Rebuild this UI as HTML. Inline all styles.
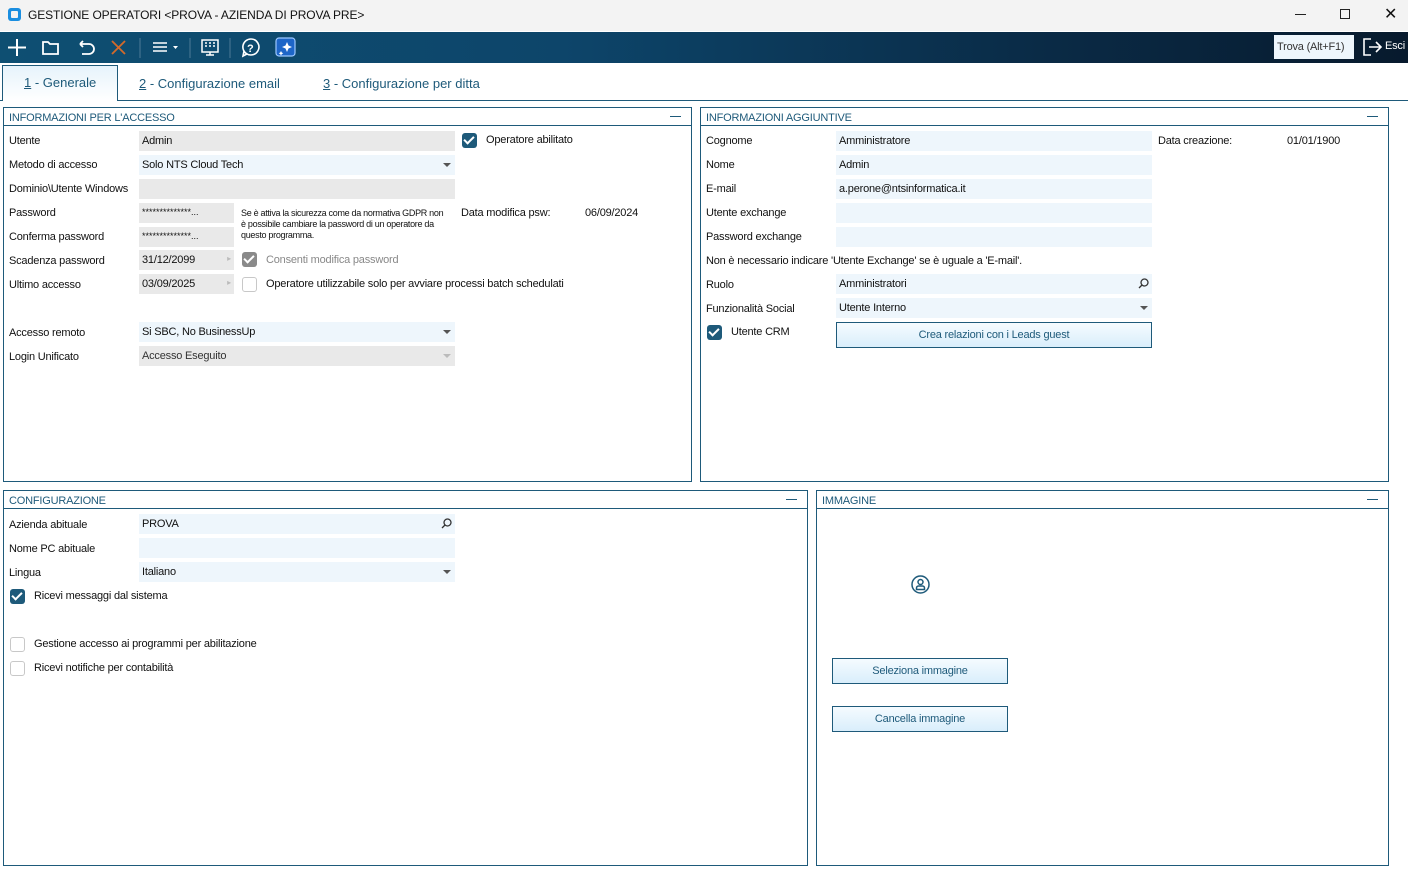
<!DOCTYPE html>
<html><head><meta charset="utf-8"><style>
*{box-sizing:border-box;margin:0;padding:0}
body{width:1408px;height:869px;background:#fff;font-family:"Liberation Sans",sans-serif;font-size:11px;letter-spacing:-0.2px;color:#111;position:relative;overflow:hidden}
.a{position:absolute;white-space:nowrap}
.pn{position:absolute;border:1px solid #1e5a7a}
.ph{position:absolute;left:0;right:0;top:0;height:18px;border-bottom:1px solid #1e5a7a;color:#1e5a7a;padding:4px 0 0 5px;font-size:11px}
.ph:after{content:"";position:absolute;right:10px;top:8px;width:11px;height:1px;background:#1e5a7a}
.in{position:absolute;height:20px;padding:4px 0 0 3px;white-space:nowrap}
.g{background:#e9e9e9}.b{background:#eef6fc}
.dd:after{content:"";position:absolute;right:4px;top:8px;border:4px solid transparent;border-top:4px solid #555;border-bottom:0}
.dl:after{border-top-color:#bbb}
.cb{position:absolute;width:15px;height:15px;border-radius:3px}
.on{background:#1e5a7a}
.on:after{content:"";position:absolute;left:4px;top:1px;width:4px;height:8px;border:solid #fff;border-width:0 2px 2px 0;transform:rotate(45deg)}
.off{border:1px solid #c8c8c8;background:#fff}
.btn{position:absolute;border:1px solid #1e5a7a;background:linear-gradient(#f5fbff,#d9eefb);color:#1e5a7a;text-align:center;padding-top:6px}
.mg{position:absolute;right:3px;top:4px}
</style></head><body>
<div class="a" style="left:0;top:0;width:1408px;height:31px;background:#f3f3f3"></div>
<div class="a" style="left:8px;top:8px;width:13px;height:13px;border-radius:3px;background:#1a8ee0"></div>
<div class="a" style="left:11px;top:11px;width:7px;height:7px;border-radius:1px;background:#f3f3f3"></div>
<div class="a" style="left:28px;top:8px;font-size:12px;letter-spacing:-0.1px">GESTIONE OPERATORI &lt;PROVA - AZIENDA DI PROVA PRE&gt;</div>
<div class="a" style="left:1295px;top:14px;width:11px;height:1px;background:#222"></div>
<div class="a" style="left:1340px;top:9px;width:10px;height:10px;border:1px solid #222"></div>
<div class="a" style="left:1384px;top:4px;font-size:16px">✕</div>
<div class="a" style="left:0;top:32px;width:1408px;height:31px;background:linear-gradient(90deg,#0e4f72 0%,#0d456a 40%,#0a2a45 75%,#071a2d 100%)"></div>
<svg class="a" style="left:0;top:32px" width="310" height="31" viewBox="0 0 310 31" fill="none" stroke="#fff" stroke-width="2">
<path d="M17 7v17M8 15.5h18"/>
<path d="M43 10h5l2 2h8v10H43z" stroke-width="1.8"/>
<path d="M80 12h9a5 5 0 0 1 0 10h-7M80 12l3-3M80 12l3 3" stroke-width="1.8"/>
<path d="M112 9l13 13M125 9l-13 13" stroke="#d46a2a" stroke-width="1.8"/>
<path d="M140 6v20" stroke="#4d7a96" stroke-width="1"/>
<path d="M153 11h14M153 15h14M153 19h14" stroke-width="1.5"/><path d="M173 14h5l-2.5 3z" fill="#fff" stroke="none"/>
<path d="M190 6v20M230 6v20" stroke="#4d7a96" stroke-width="1"/>
<rect x="202" y="8" width="16" height="12" stroke-width="1.5"/><path d="M205 11h2M209 11h2M213 11h2M205 14h2M209 14h2M213 14h2M206 23h8M210 20v3" stroke-width="1.5"/>
<path d="M251 7a8 8 0 1 1-7 12l-1 5 4-2a8 8 0 0 1 4-15z" stroke-width="1.6"/>
<text x="247" y="20" fill="#fff" stroke="none" font-size="11" font-weight="bold" font-family="Liberation Sans">?</text>
<rect x="276" y="6" width="19" height="18" rx="3" fill="#1e66c8" stroke="#9cc8ff" stroke-width="1.2"/>
<path d="M287 10l1.5 3.5 3.5 1.5-3.5 1.5-1.5 3.5-1.5-3.5-3.5-1.5 3.5-1.5z" fill="#fff" stroke="none"/>
<path d="M281 19l.8 1.5 1.5.8-1.5.8-.8 1.5-.8-1.5-1.5-.8 1.5-.8z" fill="#fff" stroke="none"/>
</svg>
<div class="a" style="left:1274px;top:35px;width:80px;height:24px;background:#eef6fc;color:#333;padding:6px 0 0 3px;font-size:11px">Trova (Alt+F1)</div>
<svg class="a" style="left:1362px;top:37px" width="22" height="20" fill="none" stroke="#fff" stroke-width="1.6"><path d="M9 2H2v16h7"/><path d="M7 10h12M14 5l5 5-5 5"/></svg>
<div class="a" style="left:1385px;top:40px;color:#fff;font-size:11px">Esci</div>
<div class="a" style="left:0;top:100px;width:1408px;height:1px;background:#1e5a7a"></div>
<div class="a" style="left:2px;top:65px;width:116px;height:36px;border:1px solid #1e5a7a;border-bottom:none;background:linear-gradient(#e6f3fb,#fff)"></div>
<div class="a" style="left:24px;top:75px;font-size:13px;color:#1e5a7a;letter-spacing:0"><u>1</u> - Generale</div>
<div class="a" style="left:139px;top:76px;font-size:13px;color:#1e5a7a;letter-spacing:0"><u>2</u> - Configurazione email</div>
<div class="a" style="left:323px;top:76px;font-size:13px;color:#1e5a7a;letter-spacing:0"><u>3</u> - Configurazione per ditta</div>

<div class="pn" style="left:3px;top:107px;width:689px;height:375px"><div class="ph">INFORMAZIONI PER L'ACCESSO</div></div>
<div class="a" style="left:9px;top:135px">Utente</div>
<div class="in g" style="left:139px;top:131px;width:316px">Admin</div>
<div class="cb on" style="left:462px;top:133px"></div><div class="a" style="left:486px;top:134px">Operatore abilitato</div>
<div class="a" style="left:9px;top:159px">Metodo di accesso</div>
<div class="in b dd" style="left:139px;top:155px;width:316px">Solo NTS Cloud Tech</div>
<div class="a" style="left:9px;top:183px">Dominio\Utente Windows</div>
<div class="in g" style="left:139px;top:179px;width:316px"></div>
<div class="a" style="left:9px;top:207px">Password</div>
<div class="in g" style="left:139px;top:203px;width:95px;font-size:9px;letter-spacing:0">**************...</div>
<div class="a" style="left:9px;top:231px">Conferma password</div>
<div class="in g" style="left:139px;top:227px;width:95px;font-size:9px;letter-spacing:0">**************...</div>
<div class="a" style="left:241px;top:208px;font-size:9px;letter-spacing:-0.3px;line-height:11px;white-space:normal;width:208px">Se è attiva la sicurezza come da normativa GDPR non è possibile cambiare la password di un operatore da questo programma.</div>
<div class="a" style="left:461px;top:207px">Data modifica psw:</div>
<div class="a" style="left:585px;top:207px">06/09/2024</div>
<div class="a" style="left:9px;top:255px">Scadenza password</div>
<div class="in g" style="left:139px;top:250px;width:95px">31/12/2099<span class="a" style="right:3px;top:4px;color:#bbb;font-size:8px">▸</span></div>
<div class="cb on" style="left:242px;top:252px;background:#8a8a8a"></div><div class="a" style="left:266px;top:254px;color:#888">Consenti modifica password</div>
<div class="a" style="left:9px;top:279px">Ultimo accesso</div>
<div class="in g" style="left:139px;top:274px;width:95px">03/09/2025<span class="a" style="right:3px;top:4px;color:#bbb;font-size:8px">▸</span></div>
<div class="cb off" style="left:242px;top:277px"></div><div class="a" style="left:266px;top:278px">Operatore utilizzabile solo per avviare processi batch schedulati</div>
<div class="a" style="left:9px;top:327px">Accesso remoto</div>
<div class="in b dd" style="left:139px;top:322px;width:316px">Si SBC, No BusinessUp</div>
<div class="a" style="left:9px;top:351px">Login Unificato</div>
<div class="in g dd dl" style="left:139px;top:346px;width:316px;color:#333">Accesso Eseguito</div>

<div class="pn" style="left:700px;top:107px;width:689px;height:375px"><div class="ph">INFORMAZIONI AGGIUNTIVE</div></div>
<div class="a" style="left:706px;top:135px">Cognome</div><div class="in b" style="left:836px;top:131px;width:316px">Amministratore</div>
<div class="a" style="left:1158px;top:135px">Data creazione:</div><div class="a" style="left:1287px;top:135px">01/01/1900</div>
<div class="a" style="left:706px;top:159px">Nome</div><div class="in b" style="left:836px;top:155px;width:316px">Admin</div>
<div class="a" style="left:706px;top:183px">E-mail</div><div class="in b" style="left:836px;top:179px;width:316px">a.perone@ntsinformatica.it</div>
<div class="a" style="left:706px;top:207px">Utente exchange</div><div class="in b" style="left:836px;top:203px;width:316px"></div>
<div class="a" style="left:706px;top:231px">Password exchange</div><div class="in b" style="left:836px;top:227px;width:316px"></div>
<div class="a" style="left:706px;top:255px">Non è necessario indicare 'Utente Exchange' se è uguale a 'E-mail'.</div>
<div class="a" style="left:706px;top:279px">Ruolo</div><div class="in b" style="left:836px;top:274px;width:316px">Amministratori<svg class="mg" width="11" height="11" fill="none" stroke="#333" stroke-width="1.3"><circle cx="6.5" cy="4.5" r="3.5"/><path d="M4 7L1 10"/></svg></div>
<div class="a" style="left:706px;top:303px">Funzionalità Social</div><div class="in b dd" style="left:836px;top:298px;width:316px">Utente Interno</div>
<div class="cb on" style="left:707px;top:325px"></div><div class="a" style="left:731px;top:326px">Utente CRM</div>
<div class="btn" style="left:836px;top:322px;width:316px;height:26px">Crea relazioni con i Leads guest</div>

<div class="pn" style="left:3px;top:490px;width:805px;height:376px"><div class="ph">CONFIGURAZIONE</div></div>
<div class="a" style="left:9px;top:519px">Azienda abituale</div><div class="in b" style="left:139px;top:514px;width:316px">PROVA<svg class="mg" width="11" height="11" fill="none" stroke="#333" stroke-width="1.3"><circle cx="6.5" cy="4.5" r="3.5"/><path d="M4 7L1 10"/></svg></div>
<div class="a" style="left:9px;top:543px">Nome PC abituale</div><div class="in b" style="left:139px;top:538px;width:316px"></div>
<div class="a" style="left:9px;top:567px">Lingua</div><div class="in b dd" style="left:139px;top:562px;width:316px">Italiano</div>
<div class="cb on" style="left:10px;top:589px"></div><div class="a" style="left:34px;top:590px">Ricevi messaggi dal sistema</div>
<div class="cb off" style="left:10px;top:637px"></div><div class="a" style="left:34px;top:638px">Gestione accesso ai programmi per abilitazione</div>
<div class="cb off" style="left:10px;top:661px"></div><div class="a" style="left:34px;top:662px">Ricevi notifiche per contabilità</div>

<div class="pn" style="left:816px;top:490px;width:573px;height:376px"><div class="ph">IMMAGINE</div></div>
<svg class="a" style="left:911px;top:575px" width="19" height="19" fill="none" stroke="#1e5a7a" stroke-width="1.5"><circle cx="9.5" cy="9.5" r="8.5"/><circle cx="9.5" cy="7" r="2.5"/><path d="M5.5 14.5v-1.5a2 2 0 0 1 2-2h4a2 2 0 0 1 2 2v1.5z"/></svg>
<div class="btn" style="left:832px;top:658px;width:176px;height:26px">Seleziona immagine</div>
<div class="btn" style="left:832px;top:706px;width:176px;height:26px">Cancella immagine</div>
</body></html>
